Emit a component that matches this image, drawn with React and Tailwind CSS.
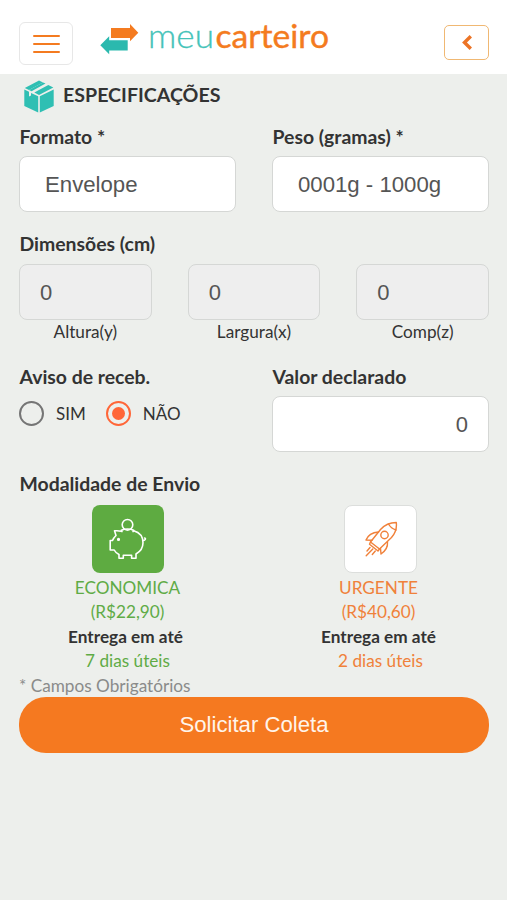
import React, { useState } from "react";

const Logo = () => (
  <svg width="232" height="50" viewBox="0 -13 232 50" aria-label="meucarteiro">
    <path d="M11 5H30V1L38.3 9.7L30 18.3V15H11Z" fill="#f47b20" />
    <path d="M27.7 17.3H9.2V13.3L0.3 22.3L9.2 31.3V27.5H27.7Z" fill="#2bb9ae" />
    <text
      x="48"
      y="24.5"
      fontSize="33"
      textLength="66"
      lengthAdjust="spacingAndGlyphs"
      fill="#45c3b9"
      stroke="#45c3b9"
      strokeWidth="0.3"
      className="font-['Lato',sans-serif] font-light"
    >
      meu
    </text>
    <text
      x="115.5"
      y="24.5"
      fontSize="32"
      textLength="113.5"
      lengthAdjust="spacingAndGlyphs"
      fill="#f47b20"
      stroke="#f47b20"
      strokeWidth="0.4"
      className="font-['Lato',sans-serif] font-normal"
    >
      carteiro
    </text>
  </svg>
);

const BoxIcon = () => (
  <svg width="30" height="33" viewBox="0 0 30 33" fill="#2fbfb3">
    <path d="M0.8 8L15 0.5L19 2.4L5 10Z" />
    <path d="M5 10L19 2.4L21.5 3.6L7.6 11.2Z" />
    <path d="M10.3 12.4L24.3 5L29.3 7.6L15 15Z" />
    <path d="M0.3 9.4L5 11.7V16.5L7 15.5V13L14.2 16.2V32.5L0.3 26Z" />
    <path d="M29.7 9.4V26L15.8 32.5V16.2Z" />
  </svg>
);

const PiggyIcon = () => (
  <svg
    width="38"
    height="42"
    viewBox="0 0 38 42"
    fill="none"
    stroke="#fff"
    strokeWidth="1.6"
    strokeLinejoin="round"
    strokeLinecap="round"
  >
    <circle cx="18.5" cy="6.8" r="5.3" />
    <path d="M13 13.6L12.3 12.3Q18.5 9.8 24.7 12.3L24 13.6" />
    <path d="M12.3 13.2C10.5 12.6 8 12.8 5.5 12.8L7 17.5C5 19.5 4 21 3.5 22.5H1.2V32H5.2C6.5 34.5 8 35.6 10 36.5V40.2H14.3V37.2H22.6V40.2H27V36C31.5 33.5 34 29.5 34 24.8C34 18.5 30 14.3 24.7 12.8" />
    <path d="M34 22.3C36 23 37.5 20 35.5 20" />
    <circle cx="9.5" cy="21.4" r="0.8" fill="#fff" />
  </svg>
);

const RocketIcon = () => (
  <svg
    width="34"
    height="36"
    viewBox="0 0 34 36"
    fill="none"
    stroke="#f0813a"
    strokeWidth="1.4"
    strokeLinejoin="round"
    strokeLinecap="round"
  >
    <path d="M32.3 1.5C26 1.5 20.5 4 16.5 8.5L6.5 21L15.5 28L27.5 16.5C31.5 12 33 7.5 32.3 1.5Z" />
    <path d="M24.5 3Q27 7.5 32 9" />
    <circle cx="20.5" cy="14" r="3.7" />
    <path d="M14.5 11C8.5 11.5 4 14 2 19L8 19.2" />
    <path d="M23.5 21C24 26 22 29.5 17 33L16.5 27.5" />
    <path d="M6.5 21L5.5 23.3L14 30L15.5 28" />
    <path d="M6 26.5L3 30M8.8 28L2.2 34.8M11.3 30L8.3 33.5" />
  </svg>
);

const Label = ({ children }) => (
  <div className="h-[38px] pl-[0.5px] text-[19.4px] leading-[37px] font-bold">{children}</div>
);

const Radio = ({ label, checked, onClick }) => (
  <button type="button" onClick={onClick} className="flex items-center">
    <span
      className={
        checked
          ? "flex size-[25px] items-center justify-center rounded-full border-[2.5px] border-[#ff6638]"
          : "flex size-[25px] items-center justify-center rounded-full border-[2.5px] border-[#757575]"
      }
    >
      {checked && <span className="size-[13px] rounded-full bg-[#ff6638]" />}
    </span>
    <span className="ml-3 text-[17px]">{label}</span>
  </button>
);

const sizes = ["Altura(y)", "Largura(x)", "Comp(z)"];

const App = () => {
  const [notice, setNotice] = useState("NÃO");

  return (
    <div className="min-h-screen bg-[#edefec] font-['Lato',sans-serif] text-[#333]">
      <header className="flex h-[74px] items-start bg-white pr-[18px] pl-[19px]">
        <button
          type="button"
          className="mt-[22px] flex h-[43px] w-[54px] flex-col items-center justify-center gap-[6px] rounded-md border-[1.5px] border-[#e7e7e7]"
        >
          <span className="h-[2px] w-[27px] rounded-full bg-[#f47b20]" />
          <span className="h-[2px] w-[27px] rounded-full bg-[#f47b20]" />
          <span className="h-[2px] w-[27px] rounded-full bg-[#f47b20]" />
        </button>
        <div className="mt-2.5 ml-[27px]">
          <Logo />
        </div>
        <button
          type="button"
          className="mt-[25px] ml-auto flex h-[35px] w-[45px] items-center justify-center rounded-[5px] border-[1.5px] border-[#f0b873]"
        >
          <svg width="10" height="15" viewBox="0 0 10 15" fill="none" stroke="#ec7426" strokeWidth="3.4">
            <path d="M8.8 1.3L2.5 7.5L8.8 13.7" />
          </svg>
        </button>
      </header>

      <main className="pr-[18px] pl-[19px]">
        <div className="flex h-11 items-start pt-1.5 pl-[5px]">
          <BoxIcon />
          <h1 className="ml-[9px] text-[19.6px] leading-[29px] font-bold">ESPECIFICAÇÕES</h1>
        </div>

        <div className="grid grid-cols-2 gap-9">
          <div>
            <Label>Formato *</Label>
            <div className="flex h-14 items-center rounded-lg border-[1.5px] border-[#d5d7d5] bg-white pt-px pl-[25px] font-['Liberation_Sans',sans-serif] text-[22.2px] text-[#555]">
              Envelope
            </div>
          </div>
          <div>
            <Label>Peso (gramas) *</Label>
            <div className="flex h-14 items-center rounded-lg border-[1.5px] border-[#d5d7d5] bg-white pt-px pl-[25px] font-['Liberation_Sans',sans-serif] text-[22.2px] text-[#555]">
              0001g - 1000g
            </div>
          </div>
        </div>

        <div className="mt-[13px]">
          <Label>Dimensões (cm)</Label>
          <div className="mt-px grid grid-cols-3 gap-9">
            {sizes.map((name) => (
              <div key={name}>
                <div className="flex h-14 items-center rounded-lg border-[1.5px] border-[#d5d7d5] bg-[#eeeeee] pl-5 font-['Liberation_Sans',sans-serif] text-[22px] text-[#555]">
                  0
                </div>
                <div className="h-6 text-center text-[17.2px] leading-6">{name}</div>
              </div>
            ))}
          </div>
        </div>

        <div className="mt-[14px] grid grid-cols-2 gap-9">
          <div>
            <Label>Aviso de receb.</Label>
            <div className="mt-[5px] flex gap-5">
              <Radio label="SIM" checked={notice === "SIM"} onClick={() => setNotice("SIM")} />
              <Radio label="NÃO" checked={notice === "NÃO"} onClick={() => setNotice("NÃO")} />
            </div>
          </div>
          <div>
            <Label>Valor declarado</Label>
            <div className="flex h-14 items-center justify-end rounded-lg border-[1.5px] border-[#d5d7d5] bg-white pr-5 font-['Liberation_Sans',sans-serif] text-[22px] text-[#555]">
              0
            </div>
          </div>
        </div>

        <div className="mt-[13px]">
          <Label>Modalidade de Envio</Label>
          <div className="mt-0.5 grid grid-cols-2 gap-9 text-center text-[17.2px] leading-[24.4px]">
            <div className="text-[#5fab46]">
              <div className="mx-auto mb-[3px] flex h-[68px] w-[72px] items-center justify-center rounded-lg bg-[#5eab41]">
                <PiggyIcon />
              </div>
              <div>ECONOMICA</div>
              <div>(R$22,90)</div>
              <div className="pr-1 font-bold text-[#333]">Entrega em até</div>
              <div>7 dias úteis</div>
            </div>
            <div className="text-[#f0813a]">
              <div className="mx-auto mb-[3px] flex h-[68px] w-[73px] items-center justify-center rounded-lg border-[1.5px] border-[#dcdedc] bg-white">
                <RocketIcon />
              </div>
              <div className="pr-1">URGENTE</div>
              <div className="pr-1">(R$40,60)</div>
              <div className="pr-1 font-bold text-[#333]">Entrega em até</div>
              <div>2 dias úteis</div>
            </div>
          </div>
        </div>

        <div className="text-[17.2px] leading-[23px] text-[#8a8b8a]">* Campos Obrigatórios</div>
        <button
          type="button"
          className="h-14 w-full rounded-[27px] bg-[#f57920] pt-px font-['Liberation_Sans',sans-serif] text-[22.2px] text-[#fff4ea]"
        >
          Solicitar Coleta
        </button>
      </main>
    </div>
  );
};

export default App;
